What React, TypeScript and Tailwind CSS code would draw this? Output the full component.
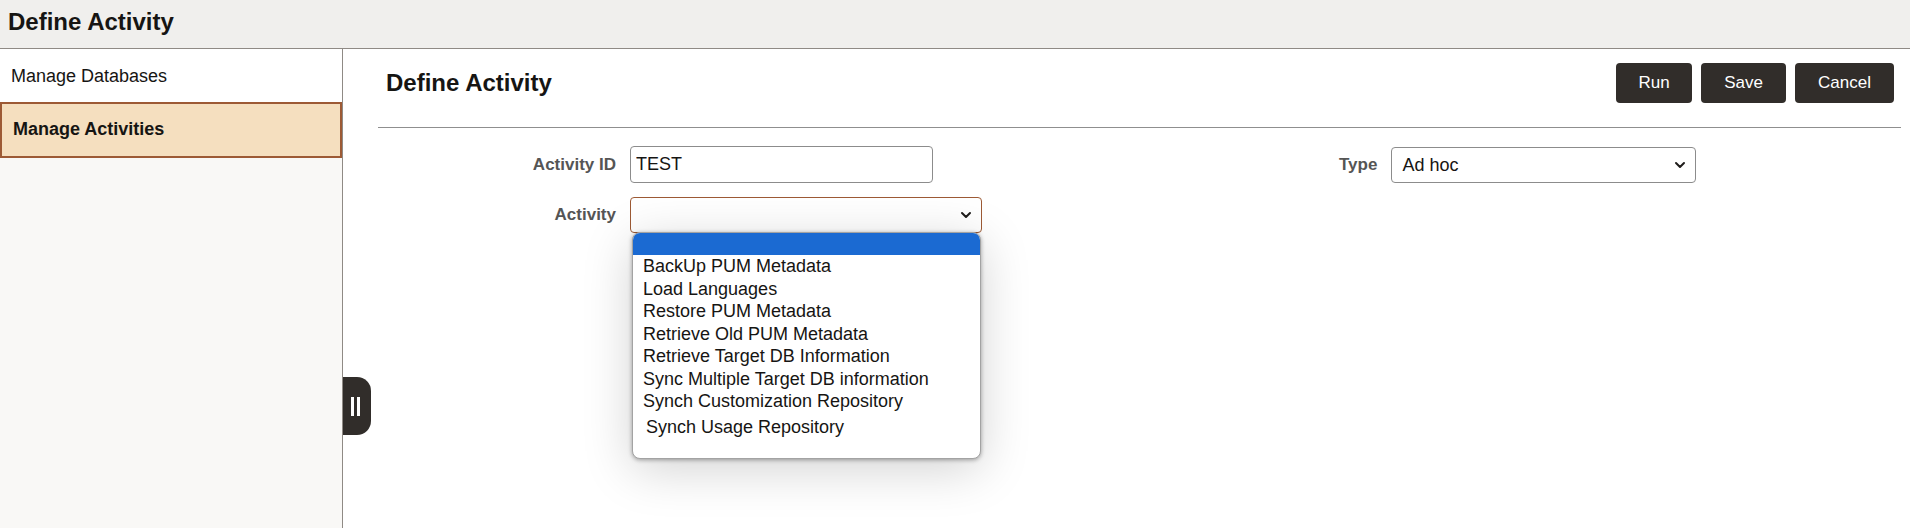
import React from "react";

const ACTIVITIES = [
  "BackUp PUM Metadata",
  "Load Languages",
  "Restore PUM Metadata",
  "Retrieve Old PUM Metadata",
  "Retrieve Target DB Information",
  "Sync Multiple Target DB information",
  "Synch Customization Repository",
];

// small down chevron used by the select boxes
const Chevron = () => (
  <svg width="12" height="8" viewBox="0 0 12 8" fill="none" stroke="#1f1d1b" strokeWidth="2" strokeLinecap="round" strokeLinejoin="round">
    <path d="M2 2l4 4 4-4" />
  </svg>
);

export default function App() {
  return (
    <div className="flex h-screen w-full flex-col overflow-hidden bg-white font-['Liberation_Sans',Arial,sans-serif] text-[#161513]">
      {/* Page title bar */}
      <header className="flex h-[49px] shrink-0 items-center border-b border-[#8f8a85] bg-[#f0efed] pb-1 pl-2">
        <h1 className="text-2xl font-bold">Define Activity</h1>
      </header>

      <div className="flex min-h-0 flex-1">
        {/* Left navigation */}
        <nav className="relative w-[343px] shrink-0 border-r border-[#8f8a85] bg-[#f9f8f6]">
          <div className="flex h-[53px] items-center bg-white pl-[11px] text-lg">Manage Databases</div>
          <div className="flex h-[56px] items-center border-2 border-[#9d5a35] bg-[#f5dfbf] pb-[3px] pl-[11px] text-lg font-bold">
            Manage Activities
          </div>
          {/* collapse handle */}
          <button
            aria-label="Collapse"
            className="absolute -right-[29px] top-[328px] flex h-[58px] w-[28px] items-center justify-center gap-[3px] rounded-r-[14px] bg-[#312d2a] pr-[3px]"
          >
            <span className="h-[19px] w-[3px] bg-white" />
            <span className="h-[19px] w-[3px] bg-white" />
          </button>
        </nav>

        {/* Main content */}
        <main className="min-w-0 flex-1 pl-[35px] pr-[9px] pt-[14px]">
          <div className="flex h-[40px] items-center justify-between pl-2 pr-[7px]">
            <h2 className="text-2xl font-bold">Define Activity</h2>
            <div className="flex gap-[9px] text-[17px] text-white">
              <button className="h-[40px] w-[76px] rounded-[4px] bg-[#312d2a]">Run</button>
              <button className="h-[40px] w-[85px] rounded-[4px] bg-[#312d2a]">Save</button>
              <button className="h-[40px] w-[99px] rounded-[4px] bg-[#312d2a]">Cancel</button>
            </div>
          </div>

          <div className="mt-[24px] border-t border-[#8f8f8f]" />

          <div className="pt-[18px]">
            {/* Activity ID / Type */}
            <div className="flex h-[37px] items-center">
              <label className="w-[238px] text-right text-[17px] font-bold text-[#555]">Activity ID</label>
              <input
                defaultValue="TEST"
                className="ml-[14px] h-[37px] w-[303px] rounded-[4px] border border-[#8c8c8c] px-[5px] text-lg outline-none"
              />
              <label className="ml-[406px] text-[17px] font-bold text-[#555]">Type</label>
              <div className="ml-[14px] flex h-[36px] w-[305px] items-center justify-between rounded-[4px] border border-[#8c8c8c] pl-[10px] pr-[9px] text-lg">
                <span>Ad hoc</span>
                <Chevron />
              </div>
            </div>

            {/* Activity */}
            <div className="mt-[14px] flex h-[36px] items-center">
              <label className="w-[238px] text-right text-[17px] font-bold text-[#555]">Activity</label>
              <div className="relative ml-[14px] flex h-[36px] w-[352px] items-center justify-end rounded-[4px] border border-[#9d5a35] pr-[9px]">
                <Chevron />
                {/* open option list */}
                <ul className="absolute left-[1px] top-full z-10 h-[227px] w-[349px] overflow-hidden rounded-lg border border-[#a3a3a3] bg-white text-lg leading-[22px] text-[#161513] shadow-[0_1px_4px_rgba(0,0,0,0.35),0_10px_50px_rgba(0,0,0,0.18)]">
                  <li className="h-[22px] bg-[#1b6ad2]" />
                  {ACTIVITIES.map((a) => (
                    <li key={a} className="h-[22.5px] whitespace-nowrap pl-[10px]">
                      {a}
                    </li>
                  ))}
                  <li className="mt-[3px] h-[22px] whitespace-nowrap pl-[13px]">Synch Usage Repository</li>
                </ul>
              </div>
            </div>
          </div>
        </main>
      </div>
    </div>
  );
}
